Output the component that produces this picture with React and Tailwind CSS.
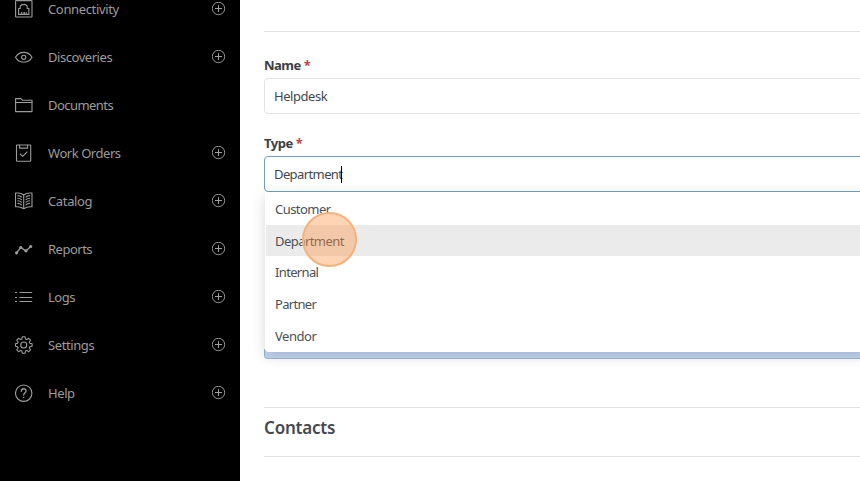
import React from "react";

function Icon({ children }) {
  return (
    <svg
      className="h-[18px] w-[18px] shrink-0"
      viewBox="0 0 18 18"
      fill="none"
      stroke="currentColor"
      strokeWidth="1.1"
      strokeLinejoin="round"
      strokeLinecap="round"
    >
      {children}
    </svg>
  );
}

const icons = {
  port: (
    <Icon>
      <rect x="0.6" y="0.6" width="16.4" height="16.4" rx="0.5" />
      <path d="M3.6 14.4V8.5H5.3V6L6.8 4.6H10.7L12.2 6V8.5H13.9V14.4Z" />
      <path d="M6.4 14V12.3M8.1 14V12.3M9.6 14V12.3M11.2 14V12.3" strokeWidth="0.9" />
    </Icon>
  ),
  eye: (
    <Icon>
      <path d="M.5 9.300C2.300 6 5.200 4.400 8.700 4.400S15.200 6 17 9.300C15.200 12.600 12.200 14.200 8.700 14.200S2.300 12.600 .5 9.300Z" />
      <circle cx="8.700" cy="9.300" r="2.100" />
    </Icon>
  ),
  folder: (
    <Icon>
      <path d="M.6 15.600V2.600H5.900L7.800 4.300H17V15.600H.6Z" />
      <path d="M.6 6.500H17" />
    </Icon>
  ),
  clipboard: (
    <Icon>
      <rect x="1.500" y="1" width="14.200" height="16.200" rx="0.500" />
      <path d="M4.600 1.200V4.100H12.600V1.200" />
      <path d="M5.200 10L7.600 12.300L12.100 7.800" />
    </Icon>
  ),
  book: (
    <Icon>
      <path d="M8.700 3C7.200 1.700 5 1 2.700 1H.5V14.800C4 14.500 6.700 15.300 8.700 16.700C10.700 15.300 13.400 14.500 17 14.800V1H14.800C12.500 1 10.200 1.700 8.700 3ZM8.700 3V16.700" />
      <path
        d="M2.900 3.600Q5 3.700 6.500 5M2.900 6.200Q5 6.300 6.500 7.600M2.900 8.800Q5 8.900 6.500 10.200M2.900 11.400Q5 11.500 6.500 12.800M14.600 3.600Q12.500 3.700 11 5M14.600 6.200Q12.500 6.300 11 7.600M14.600 8.800Q12.500 8.900 11 10.200M14.600 11.400Q12.500 11.500 11 12.800"
      />
    </Icon>
  ),
  chart: (
    <Icon>
      <path d="M1.500 12.800L5.800 7.500L10.900 10.900L15.700 6.500" strokeWidth="1.300" />
      <g fill="currentColor" stroke="none">
        <circle cx="1.600" cy="12.800" r="1.600" />
        <circle cx="5.800" cy="7.500" r="1.600" />
        <circle cx="10.900" cy="10.800" r="1.600" />
        <circle cx="15.700" cy="6.500" r="1.600" />
      </g>
    </Icon>
  ),
  list: (
    <Icon>
      <path d="M4.500 4.500H17.200M4.500 9.500H17.200M4.500 13.500H17.200M0 4.500H2M0 9.500H2M0 13.500H2" strokeLinecap="butt" />
    </Icon>
  ),
  gear: (
    <Icon>
      <path d="M7.300.8H10.100L10.500 3L11.900 3.600L13.700 2.300L15.600 4.200L14.300 6L14.900 7.400L17.100 7.800V10.200L14.900 10.600L14.300 12L15.600 13.800L13.700 15.700L11.900 14.400L10.500 15L10.100 17.200H7.300L6.900 15L5.500 14.400L3.700 15.700L1.800 13.800L3.100 12L2.500 10.600L.4 10.200V7.800L2.500 7.400L3.100 6L1.800 4.200L3.700 2.300L5.500 3.600L6.900 3Z" />
      <circle cx="8.700" cy="9" r="3" />
    </Icon>
  ),
  help: (
    <Icon>
      <circle cx="8.700" cy="9.200" r="8.200" />
      <path d="M6.300 7.300C6.400 3.900 11.100 4 11.100 7C11.100 8.900 8.700 8.800 8.700 11.100" strokeWidth="1.300" />
      <path d="M8.700 13.400V13.600" strokeWidth="1.500" />
    </Icon>
  ),
};

const items = [
  { label: "Connectivity", icon: "port", add: true, tracking: "tracking-[-0.35px]" },
  { label: "Discoveries", icon: "eye", add: true, tracking: "tracking-[-0.45px]" },
  { label: "Documents", icon: "folder", add: false, tracking: "tracking-[-0.55px]" },
  { label: "Work Orders", icon: "clipboard", add: true, tracking: "tracking-[-0.45px]" },
  { label: "Catalog", icon: "book", add: true, tracking: "tracking-[-0.35px]" },
  { label: "Reports", icon: "chart", add: true, tracking: "tracking-[-0.5px]" },
  { label: "Logs", icon: "list", add: true, tracking: "tracking-[-0.5px]" },
  { label: "Settings", icon: "gear", add: true, tracking: "tracking-[-0.4px]" },
  { label: "Help", icon: "help", add: true, tracking: "tracking-[-0.4px]" },
];

const options = [
  { label: "Customer", style: "pt-px tracking-[-0.55px]" },
  { label: "Department", style: "pt-[3px] tracking-[-0.55px]" },
  { label: "Internal", style: "pt-px tracking-[-0.65px]" },
  { label: "Partner", style: "pt-px tracking-[-0.7px]" },
  { label: "Vendor", style: "pt-[3px] tracking-[-0.45px]" },
];

function AddIcon() {
  return (
    <svg className="mb-px h-[14px] w-[14px]" viewBox="0 0 14 14" fill="none" stroke="currentColor">
      <circle cx="6.500" cy="6.500" r="6.200" strokeWidth="0.950" />
      <path d="M6.500 3V10M3 6.500H10" strokeWidth="1" />
    </svg>
  );
}

function Sidebar() {
  return (
    <nav className="h-full w-60 shrink-0 overflow-hidden bg-black text-[#9c9c9c]">
      <ul className="-mt-[15px]">
        {items.map((item) => (
          <li key={item.label} className="flex h-12 items-center pr-[14px] pl-[15px]">
            {icons[item.icon]}
            <span className={`ml-[15px] flex-1 pt-0.5 text-[13px] ${item.tracking}`}>{item.label}</span>
            {item.add && <AddIcon />}
          </li>
        ))}
      </ul>
    </nav>
  );
}

function FieldLabel({ children }) {
  return (
    <div className="flex h-[26px] gap-[3px] text-[13px] leading-[26px] font-bold tracking-[-0.5px] text-[#3b4044]">
      <span>{children}</span>
      <span className="text-[#b84a42]">*</span>
    </div>
  );
}

export default function App() {
  return (
    <div className="flex h-[481px] w-[860px] overflow-hidden bg-white font-['Noto_Sans','Open_Sans',sans-serif]">
      <Sidebar />
      <main className="min-w-0 flex-1 overflow-hidden pl-6">
        <div className="h-8 border-b border-[#e2e2e2]" />
        <section className="pt-5">
          <FieldLabel>Name</FieldLabel>
          <div className="-mr-2 flex h-9 items-center rounded border border-[#e0e2e4] pt-0.5 pl-[9px] text-[13px] tracking-[-0.45px] text-[#43484d]">
            Helpdesk
          </div>
          <div className="mt-4">
            <FieldLabel>Type</FieldLabel>
          </div>
          <div className="relative -mr-2">
            <div className="flex h-9 items-center rounded border border-[#6f9fc0] pl-[9px] text-[13px] tracking-[-0.6px] text-[#43484d]">
              <span className="pt-0.5">Department</span>
              <span className="-ml-px h-[17px] w-px bg-black" />
            </div>
            <ul className="absolute top-9 left-px z-10 h-[160px] w-full rounded-b bg-white pt-px text-[13px] text-[#4b4f53] shadow-[0_4px_14px_rgba(0,0,0,0.16)]">
              {options.map(({ label, style }) => (
                <li
                  key={label}
                  className={`ml-px flex h-[31.700px] items-center pl-[9px] ${style} ${label === "Department" ? "bg-[#ebebeb]" : ""}`}
                >
                  {label}
                </li>
              ))}
            </ul>
            <div className="absolute top-[56px] left-[38px] z-20 h-[55px] w-[55px] rounded-full border-2 border-[#f6b27a] bg-[#ff9345]/40" />
          </div>
          <div className="mt-[157px] -mr-2 h-2.5 rounded-b border border-t-0 border-[#9db6dd] bg-[#c3d7f3]" />
        </section>
        <section className="mt-12 h-[50px] border-y border-[#e2e2e2] pt-[6px]">
          <h2 className="text-[17px] leading-7 font-semibold tracking-[-0.2px] text-[#45494d]">Contacts</h2>
        </section>
      </main>
    </div>
  );
}
